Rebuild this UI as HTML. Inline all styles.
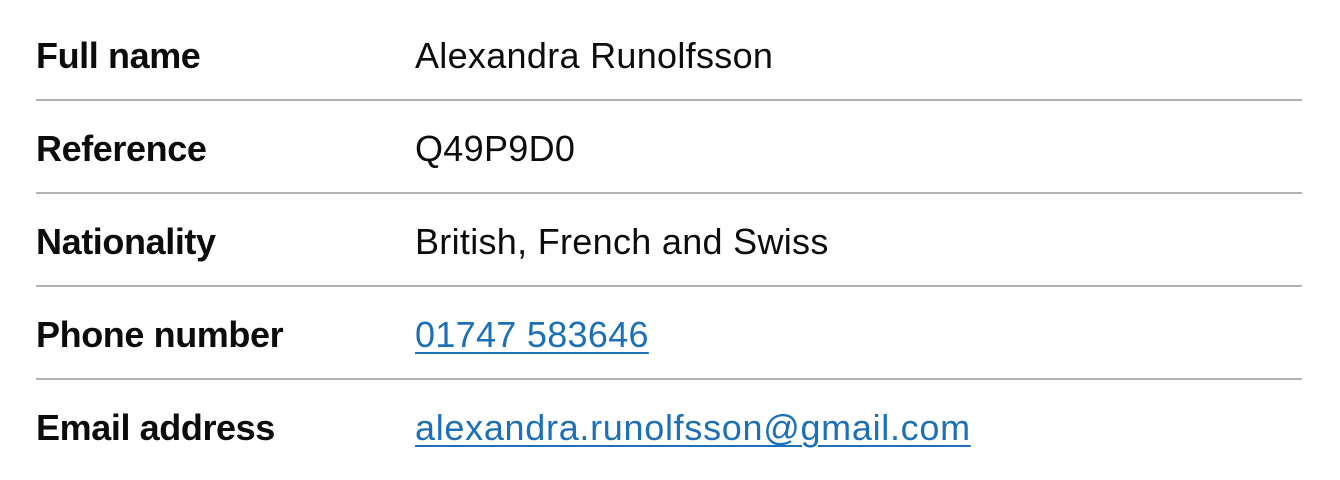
<!DOCTYPE html>
<html><head><meta charset="utf-8"><style>
html,body{margin:0;padding:0;background:#fff;width:1340px;height:480px;overflow:hidden}
body{font-family:"Liberation Sans",Arial,sans-serif;color:#0b0c0c}
.list{position:absolute;left:36px;top:8px;width:1266px}
.row{display:flex;border-bottom:2px solid #b1b4b6;height:91px;box-sizing:content-box}
.row:last-child{border-bottom:none}
.k,.v{font-size:36px;line-height:50px;padding-top:23px}
.k{width:379px;font-weight:bold;letter-spacing:-0.4px}
.v{letter-spacing:0.3px}
.v a{color:#1d70b8;text-decoration:underline;text-decoration-thickness:2px;text-underline-offset:5px}
.e{letter-spacing:0.7px}
</style></head><body>
<div class="list">
<div class="row"><div class="k">Full name</div><div class="v">Alexandra Runolfsson</div></div>
<div class="row"><div class="k">Reference</div><div class="v">Q49P9D0</div></div>
<div class="row"><div class="k">Nationality</div><div class="v">British, French and Swiss</div></div>
<div class="row"><div class="k">Phone number</div><div class="v"><a>01747 583646</a></div></div>
<div class="row"><div class="k">Email address</div><div class="v"><a class="e">alexandra.runolfsson@gmail.com</a></div></div>
</div>
</body></html>
